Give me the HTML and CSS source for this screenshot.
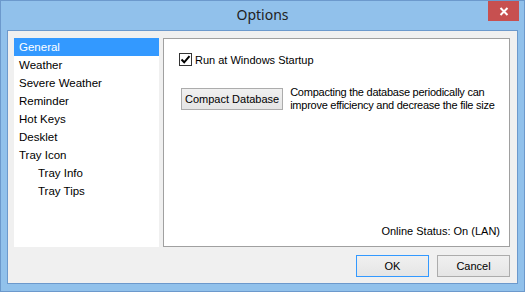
FILE: index.html
```html
<!DOCTYPE html>
<html lang="en">
<head>
    <meta charset="UTF-8">
    <title>Options</title>
    <link rel="stylesheet" href="styles.css">
</head>
<body>
    <div class="window">
        <div class="titlebar">
            <span></span>
            <span class="title">Options</span>
            <button class="close" type="button" aria-label="Close">
                <svg width="10" height="9" viewBox="0 0 10 9">
                    <path d="M1.5 1 L8.5 8 M8.5 1 L1.5 8" stroke="#fff" stroke-width="2"/>
                </svg>
            </button>
        </div>

        <div class="client">
            <div class="main">
                <ul class="nav">
                    <li class="selected">General</li>
                    <li>Weather</li>
                    <li>Severe Weather</li>
                    <li>Reminder</li>
                    <li>Hot Keys</li>
                    <li>Desklet</li>
                    <li>Tray Icon</li>
                    <li class="sub">Tray Info</li>
                    <li class="sub">Tray Tips</li>
                </ul>

                <div class="panel">
                    <label class="check">
                        <span class="box">
                            <svg width="11" height="11" viewBox="0 0 11 11">
                                <path d="M1.5 5.5 L4.2 8.3 L9.5 2.2" fill="none" stroke="#000" stroke-width="2"/>
                            </svg>
                        </span>
                        Run at Windows Startup
                    </label>

                    <div class="compact">
                        <button class="btn" type="button">Compact Database</button>
                        <p>Compacting the database periodically can<br>improve efficiency and decrease the file size</p>
                    </div>

                    <div class="status">Online Status: On (LAN)</div>
                </div>
            </div>

            <div class="actions">
                <button class="btn default" type="button">OK</button>
                <button class="btn" type="button">Cancel</button>
            </div>
        </div>
    </div>
</body>
</html>
```

FILE: styles.css
```css
* {
    margin: 0;
    padding: 0;
    box-sizing: border-box;
}

body {
    font-family: "Liberation Sans", Arial, sans-serif;
    font-size: 11px;
    color: #000;
    background-color: #91c1eb;
}

.window {
    width: 525px;
    height: 292px;
    background-color: #91c1eb;
    border: 1px solid #6c99cc;
    display: flex;
    flex-direction: column;
}

.titlebar {
    height: 29px;
    display: grid;
    grid-template-columns: 1fr auto 1fr;
    align-items: start;
}

.title {
    font-family: "Noto Sans", "Open Sans", sans-serif;
    font-size: 14px;
    color: #222;
    line-height: 28px;
}

.close {
    justify-self: end;
    width: 31px;
    height: 20px;
    margin-right: 5px;
    border: none;
    background-color: #c75050;
    display: flex;
    justify-content: center;
    align-items: center;
}

.client {
    flex: 1;
    margin: 0 6px 7px 6px;
    border: 1px solid #6c99cc;
    background-color: #f0f0f0;
    padding: 7px 7px 6px 6px;
    display: flex;
    flex-direction: column;
}

.main {
    display: flex;
    gap: 4px;
    height: 209px;
}

.nav {
    list-style: none;
    width: 145px;
    flex-shrink: 0;
    background-color: #fff;
    font-size: 11.5px;
}

.nav li {
    height: 18px;
    line-height: 18px;
    padding-left: 5px;
}

.nav li.selected {
    background-color: #3399ff;
    color: #fff;
}

.nav li.sub {
    padding-left: 24px;
}

.panel {
    flex: 1;
    min-width: 0;
    background-color: #fff;
    border: 1px solid #a0a0a0;
    padding: 13px 9px 9px 15px;
    display: flex;
    flex-direction: column;
}

.check {
    display: flex;
    align-items: center;
    gap: 3px;
    height: 15px;
}

.box {
    width: 13px;
    height: 13px;
    border: 1px solid #333;
    display: flex;
    justify-content: center;
    align-items: center;
}

.compact {
    display: flex;
    align-items: center;
    gap: 7px;
    margin-top: 19px;
    padding-left: 2px;
}

.compact p {
    line-height: 13px;
    white-space: nowrap;
    letter-spacing: -0.25px;
}

.btn {
    font-family: "Liberation Sans", Arial, sans-serif;
    font-size: 11px;
    color: #000;
    height: 22px;
    padding: 0 3px;
    white-space: nowrap;
    flex-shrink: 0;
    border: 1px solid #acacac;
    background: linear-gradient(#f0f0f0, #e5e5e5);
}

.status {
    margin-top: auto;
    text-align: right;
}

.actions {
    margin-top: auto;
    display: flex;
    justify-content: flex-end;
    gap: 8px;
}

.actions .btn {
    width: 73px;
}

.btn.default {
    border-color: #3399ff;
}
```
